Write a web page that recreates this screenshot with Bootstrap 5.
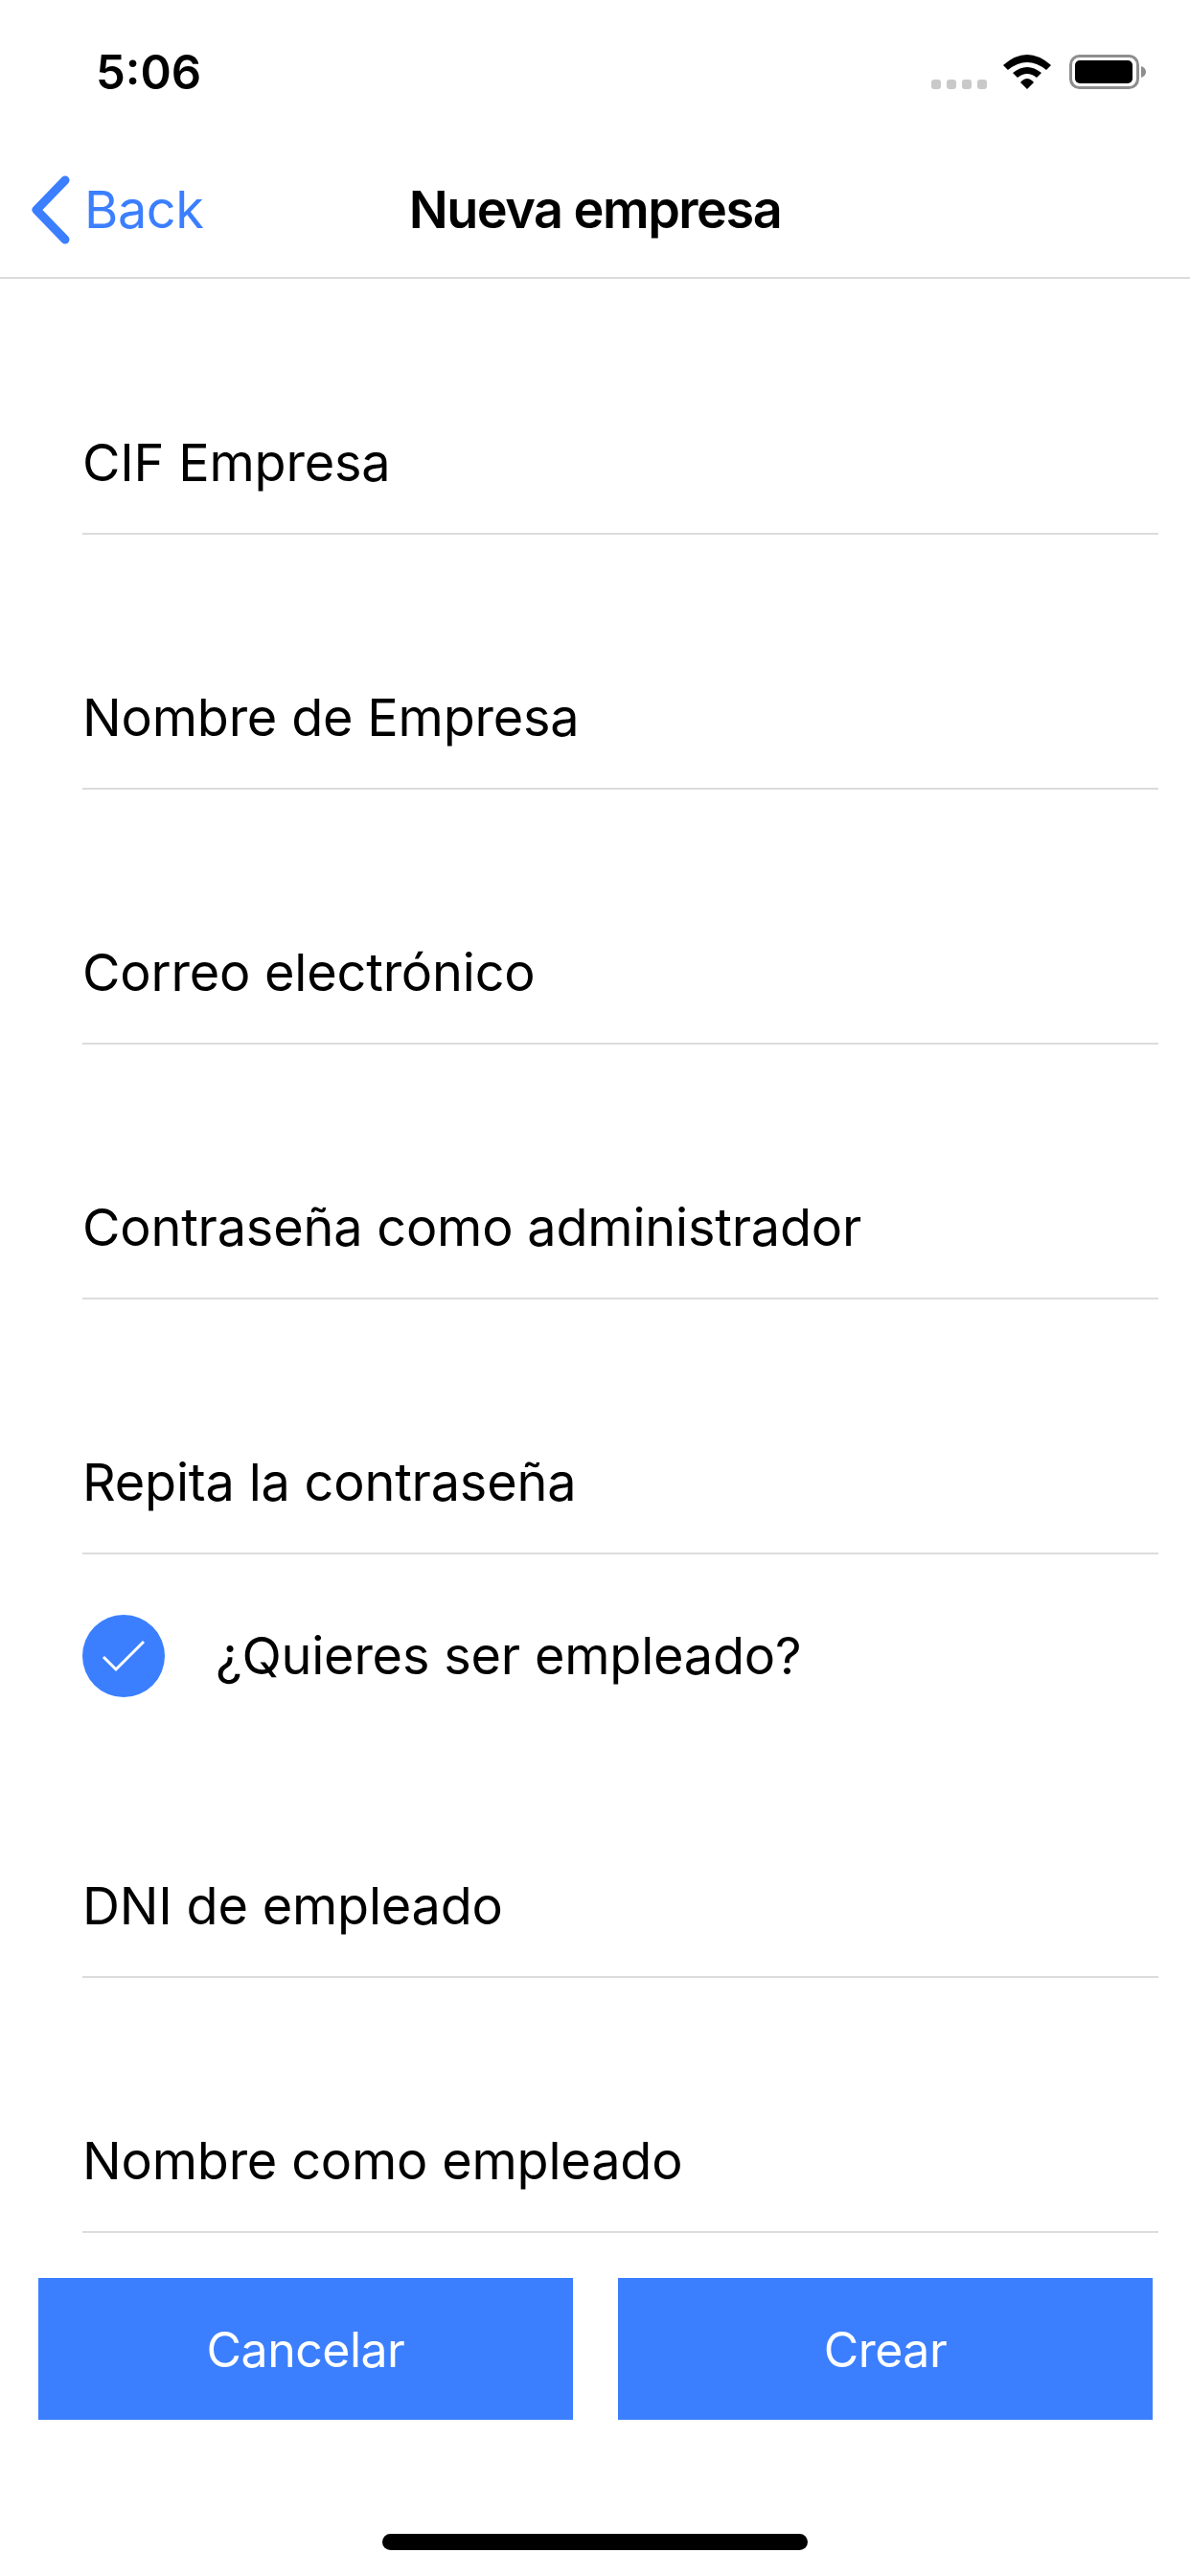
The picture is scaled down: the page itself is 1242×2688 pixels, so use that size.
<!DOCTYPE html>
<html lang="es">
<head>
  <meta charset="UTF-8">
  <meta name="viewport" content="width=device-width, initial-scale=1.0">
  <title>Nueva empresa</title>
  <link href="https://cdn.jsdelivr.net/npm/bootstrap@5.3.0/dist/css/bootstrap.min.css" rel="stylesheet">
  <style>
    body { background: #fff; color: #000; font-family: Inter, "Liberation Sans", sans-serif; font-size: 54px; letter-spacing: -0.2px; }
    .phone { width: 1242px; height: 2688px; overflow: hidden; }
    .status-bar { height: 132px; padding: 0 45px 0 100px; }
    .status-time { font-size: 49px; font-weight: 600; line-height: 46px; margin-top: 53px; letter-spacing: 0; }
    .status-icons { margin-top: 57px; }
    .dots { gap: 6px; margin-top: 26px; margin-right: 17px; }
    .dots span { width: 10px; height: 10px; border-radius: 3px; background: #c9c9c9; }
    .wifi-icon { margin-right: 19px; }
    .app-nav { height: 159px; padding: 0; border-bottom: 2px solid #dcdcdc; position: relative; }
    .back-link { color: #3b7fff; text-decoration: none; font-size: 54px; letter-spacing: -0.4px; margin-left: 32px; gap: 14px; line-height: 72px; padding-top: 16px; }
    .nav-title { font-size: 54px; font-weight: 600; letter-spacing: -1.5px; position: absolute; left: 0; right: 0; text-align: center; line-height: 72px; padding-top: 16px; }
    .form-list { padding-top: 1.5px; }
    .field { height: 265.9px; margin: 0 33px 0 86px; border-bottom: 2px solid #dcdcdc; padding-bottom: 43px; line-height: 60px; }
    .check-row { height: 212px; padding: 0 0 0 86px; gap: 53px; }
    .check-dot { width: 86px; height: 86px; border-radius: 50%; background: #3b7fff; }
    .form-list .after-check { height: 230px; }
    .action-row { gap: 47px; padding: 0 39px 0 40px; margin-top: 47px; }
    .action-btn { flex: 1 1 0; height: 148px; background: #3b7fff; border: 0; border-radius: 0; color: #fff; font-size: 50px; letter-spacing: -0.5px; padding-top: 10px; }
    .action-btn:hover { background: #3b7fff; color: #fff; }
    .home-bar { width: 444px; height: 17px; background: #000; border-radius: 9px; margin: 119px auto 0; }
  </style>
</head>
<body>
  <div class="phone d-flex flex-column">
    <div class="status-bar d-flex justify-content-between align-items-start">
      <div class="status-time">5:06</div>
      <div class="status-icons d-flex align-items-start">
        <div class="dots d-flex"><span></span><span></span><span></span><span></span></div>
        <svg width="50" height="37" viewBox="0 0 50 37" class="wifi-icon">
          <path d="M0 11 Q25 -11 50 11 L45 16 Q25 0 5 16 Z" fill="#000"/>
          <path d="M10 19 Q25 7 40 19 L35 24 Q25 16 15 24 Z" fill="#000"/>
          <path d="M18 29 Q25 21 32 29 L25 36 Z" fill="#000"/>
        </svg>
        <svg width="81" height="36" viewBox="0 0 81 36">
          <rect x="1.5" y="1.5" width="70" height="33" rx="9" fill="none" stroke="#8e8e8e" stroke-width="3"/>
          <rect x="6" y="6" width="60" height="24" rx="5" fill="#000"/>
          <path d="M75 12 C78 13 80 15 80 18 C80 21 78 23 75 24 Z" fill="#8e8e8e"/>
        </svg>
      </div>
    </div>

    <nav class="navbar app-nav align-items-center">
      <a href="#" class="back-link d-flex align-items-center">
        <svg width="42" height="72" viewBox="0 0 42 72"><path d="M36 5 L6 36 L36 67" fill="none" stroke="#3b7fff" stroke-width="9" stroke-linecap="round" stroke-linejoin="round"/></svg>
        <span>Back</span>
      </a>
      <div class="nav-title">Nueva empresa</div>
    </nav>

    <div class="form-list">
      <div class="field d-flex align-items-end">CIF Empresa</div>
      <div class="field d-flex align-items-end">Nombre de Empresa</div>
      <div class="field d-flex align-items-end">Correo electrónico</div>
      <div class="field d-flex align-items-end">Contraseña como administrador</div>
      <div class="field d-flex align-items-end">Repita la contraseña</div>
      <div class="check-row d-flex align-items-center">
        <div class="check-dot d-flex align-items-center justify-content-center">
          <svg width="46" height="34" viewBox="0 0 46 34"><path d="M2 18 L15 31 L44 2" fill="none" stroke="#fff" stroke-width="3"/></svg>
        </div>
        <span>¿Quieres ser empleado?</span>
      </div>
      <div class="field after-check d-flex align-items-end">DNI de empleado</div>
      <div class="field d-flex align-items-end">Nombre como empleado</div>
    </div>

    <div class="action-row d-flex">
      <button type="button" class="btn action-btn">Cancelar</button>
      <button type="button" class="btn action-btn">Crear</button>
    </div>
    <div class="home-bar"></div>
  </div>
  <script src="https://cdn.jsdelivr.net/npm/bootstrap@5.3.0/dist/js/bootstrap.bundle.min.js"></script>
</body>
</html>
